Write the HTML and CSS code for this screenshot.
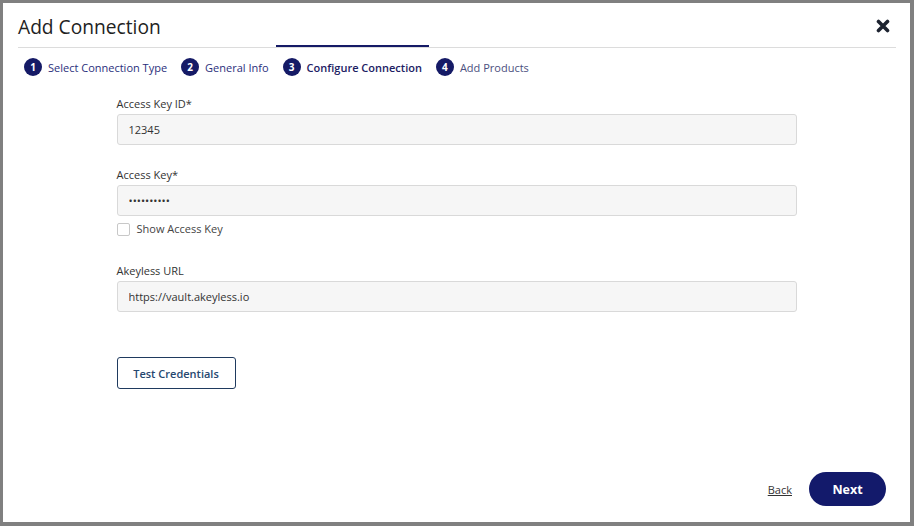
FILE: index.html
```html
<!DOCTYPE html>
<html lang="en">

<head>
    <meta charset="UTF-8">
    <meta name="viewport" content="width=device-width, initial-scale=1.0">
    <title>Add Connection</title>
    <link rel="stylesheet" href="styles.css">
</head>

<body>
    <div class="dialog">
        <!-- header -->
        <div class="dialog-header">
            <h1>Add Connection</h1>
            <button class="close" aria-label="Close">
                <svg width="14" height="14" viewBox="0 0 14 14">
                    <path d="M2.5 2.5 L11.5 11.5 M11.5 2.5 L2.5 11.5" stroke="#1d2330" stroke-width="3.6" stroke-linecap="round" />
                </svg>
            </button>
        </div>

        <!-- steps -->
        <ul class="steps">
            <li class="step done"><span class="num">1</span>Select Connection Type</li>
            <li class="step done"><span class="num">2</span>General Info</li>
            <li class="step active"><span class="num">3</span>Configure Connection</li>
            <li class="step"><span class="num">4</span>Add Products</li>
        </ul>

        <!-- form -->
        <div class="form">
            <div class="field">
                <label for="keyId">Access Key ID*</label>
                <input type="text" id="keyId" value="12345">
            </div>
            <div class="field">
                <label for="key">Access Key*</label>
                <input type="password" id="key" value="1234567890">
                <label class="check"><input type="checkbox"> Show Access Key</label>
            </div>
            <div class="field">
                <label for="url">Akeyless URL</label>
                <input type="text" id="url" value="https://vault.akeyless.io">
            </div>
            <button class="test">Test Credentials</button>
        </div>

        <!-- footer -->
        <div class="dialog-footer">
            <a href="#" class="back">Back</a>
            <button class="next">Next</button>
        </div>
    </div>
</body>

</html>
```

FILE: styles.css
```css
* {
    box-sizing: border-box;
}

body {
    margin: 0;
    padding: 0;
    font-family: "Open Sans", "Noto Sans", Arial, sans-serif;
    color: #333;
    background-color: #808080;
}

.dialog {
    width: 914px;
    height: 526px;
    background-color: #fff;
    border-style: solid;
    border-color: #808080;
    border-width: 3px 4px 4px 3px;
    display: flex;
    flex-direction: column;
}

/* header */
.dialog-header {
    margin: 0 14px 0 15px;
    padding: 10px 6px 6px 0;
    border-bottom: 1px solid #dcdcdc;
    display: flex;
    justify-content: space-between;
    align-items: center;
}

.dialog-header h1 {
    margin: 0;
    font-size: 19.2px;
    line-height: 28px;
    font-weight: 400;
    color: #222;
}

.close {
    border: none;
    background: none;
    padding: 0;
    margin-top: -2px;
    display: flex;
    cursor: pointer;
}

/* steps */
.steps {
    list-style: none;
    margin: -3px 0 0 14px;
    padding: 0;
    display: flex;
}

.step {
    padding: 11px 7px 0 7px;
    border-top: 2px solid transparent;
    display: flex;
    align-items: center;
    font-size: 11px;
    color: #4b4f7e;
}

.step .num {
    width: 18px;
    height: 18px;
    border-radius: 50%;
    background-color: #151a66;
    color: #fff;
    font-size: 10px;
    font-weight: 700;
    display: flex;
    align-items: center;
    justify-content: center;
    margin-right: 6px;
}

.step.done {
    color: #2a2f7c;
}

.step.active {
    border-top-color: #151a66;
    color: #1c2063;
    font-weight: 600;
}

/* form */
.form {
    width: 680px;
    margin: 20px auto 0;
    flex: 1;
}

.field {
    margin-bottom: 22px;
}

.field label {
    display: block;
    font-size: 11px;
    line-height: 16px;
    margin-bottom: 2px;
    color: #333;
}

.field input[type="text"],
.field input[type="password"] {
    width: 100%;
    height: 31px;
    padding: 0 11px;
    background-color: #f6f6f6;
    border: 1px solid #d9d9d9;
    border-radius: 3px;
    font-family: inherit;
    font-size: 11px;
    color: #333;
}

.field label.check {
    display: flex;
    align-items: center;
    margin: 5px 0 0;
    color: #444;
}

.field:nth-child(2) {
    margin-bottom: 26px;
}

.check input {
    appearance: none;
    width: 13px;
    height: 13px;
    margin: 0 7px 0 0;
    border: 1px solid #c8c8c8;
    border-radius: 2px;
    background: #fff;
}

.test {
    margin-top: 23px;
    width: 119px;
    height: 32px;
    background: #fff;
    border: 1px solid #1f3a5e;
    border-radius: 3px;
    font-family: inherit;
    font-size: 11px;
    font-weight: 600;
    color: #26476f;
    cursor: pointer;
}

/* footer */
.dialog-footer {
    display: flex;
    justify-content: flex-end;
    align-items: center;
    gap: 17px;
    padding: 0 24px 16px 0;
}

.back {
    font-size: 11px;
    color: #333;
}

.next {
    width: 77px;
    height: 34px;
    border: none;
    border-radius: 17px;
    background-color: #131a6b;
    color: #fff;
    font-family: inherit;
    font-size: 12.5px;
    font-weight: 700;
    cursor: pointer;
}
```
